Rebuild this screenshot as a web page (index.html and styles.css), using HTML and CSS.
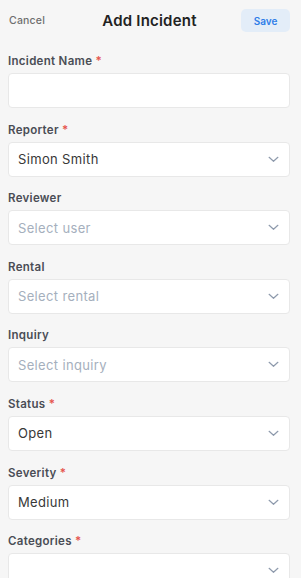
FILE: index.html
```html
<!DOCTYPE html>
<html lang="en">
<head>
  <meta charset="UTF-8" />
  <meta name="viewport" content="width=device-width, initial-scale=1.0"/>
  <title>Add Incident</title>
  <link rel="stylesheet" href="styles.css">
</head>
<body>

  <header class="topbar">
    <button class="link-btn">Cancel</button>
    <h1>Add Incident</h1>
    <button class="save-btn">Save</button>
  </header>

  <form class="form">
    <div class="field">
      <label>Incident Name <span class="req">*</span></label>
      <div class="box"></div>
    </div>

    <div class="field">
      <label>Reporter <span class="req">*</span></label>
      <div class="box select">
        <span class="value">Simon Smith</span>
        <svg class="chevron" viewBox="0 0 12 8"><path d="M1 1.5l5 4.5 5-4.5"/></svg>
      </div>
    </div>

    <div class="field">
      <label>Reviewer</label>
      <div class="box select">
        <span class="placeholder">Select user</span>
        <svg class="chevron" viewBox="0 0 12 8"><path d="M1 1.5l5 4.5 5-4.5"/></svg>
      </div>
    </div>

    <div class="field">
      <label>Rental</label>
      <div class="box select">
        <span class="placeholder">Select rental</span>
        <svg class="chevron" viewBox="0 0 12 8"><path d="M1 1.5l5 4.5 5-4.5"/></svg>
      </div>
    </div>

    <div class="field">
      <label>Inquiry</label>
      <div class="box select">
        <span class="placeholder">Select inquiry</span>
        <svg class="chevron" viewBox="0 0 12 8"><path d="M1 1.5l5 4.5 5-4.5"/></svg>
      </div>
    </div>

    <div class="field">
      <label>Status <span class="req">*</span></label>
      <div class="box select">
        <span class="value">Open</span>
        <svg class="chevron" viewBox="0 0 12 8"><path d="M1 1.5l5 4.5 5-4.5"/></svg>
      </div>
    </div>

    <div class="field">
      <label>Severity <span class="req">*</span></label>
      <div class="box select">
        <span class="value">Medium</span>
        <svg class="chevron" viewBox="0 0 12 8"><path d="M1 1.5l5 4.5 5-4.5"/></svg>
      </div>
    </div>

    <div class="field">
      <label>Categories <span class="req">*</span></label>
      <div class="box select">
        <span class="value"></span>
        <svg class="chevron" viewBox="0 0 12 8"><path d="M1 1.5l5 4.5 5-4.5"/></svg>
      </div>
    </div>
  </form>

</body>
</html>
```

FILE: styles.css
```css
body {
  font-family: 'Inter', 'Open Sans', sans-serif;
  background: #f6f6f6;
  color: #2b2b2b;
  margin: 0;
  padding: 0;
  overflow: hidden;
}

.topbar {
  display: flex;
  align-items: center;
  justify-content: space-between;
  padding: 9px 11px 0 9px;
  height: 23px;
}

.topbar h1 {
  margin: 0;
  font-size: 15px;
  font-weight: 600;
  color: #222;
  letter-spacing: 0.2px;
}

.link-btn {
  border: none;
  background: none;
  padding: 0;
  font-family: inherit;
  font-size: 10.5px;
  font-weight: 500;
  color: #6e6e6e;
  width: 49px;
  text-align: left;
  letter-spacing: 0.2px;
}

.save-btn {
  border: none;
  background: #e3edf8;
  color: #2f7ee8;
  font-family: inherit;
  font-size: 10px;
  font-weight: 600;
  width: 49px;
  height: 23px;
  border-radius: 5px;
  padding: 0;
}

.form {
  display: flex;
  flex-direction: column;
  gap: 14.6px;
  padding: 22px 11px 0 8px;
}

.field label {
  display: block;
  font-size: 11.5px;
  line-height: 14px;
  font-weight: 600;
  color: #4a4d55;
  margin-bottom: 5px;
  letter-spacing: 0.3px;
}

.req {
  color: #e5534b;
}

.box {
  height: 35px;
  box-sizing: border-box;
  background: #fff;
  border: 1px solid #e8e8e8;
  border-radius: 4px;
  display: flex;
  align-items: center;
  justify-content: space-between;
  padding: 0 10px 0 9px;
}

.value,
.placeholder {
  font-size: 13px;
  letter-spacing: 0.35px;
  color: #383838;
}

.placeholder {
  color: #a5afbd;
}

.chevron {
  width: 11px;
  height: 7px;
  fill: none;
  stroke: #8f9bad;
  stroke-width: 1.4;
  stroke-linecap: round;
  stroke-linejoin: round;
}
```
